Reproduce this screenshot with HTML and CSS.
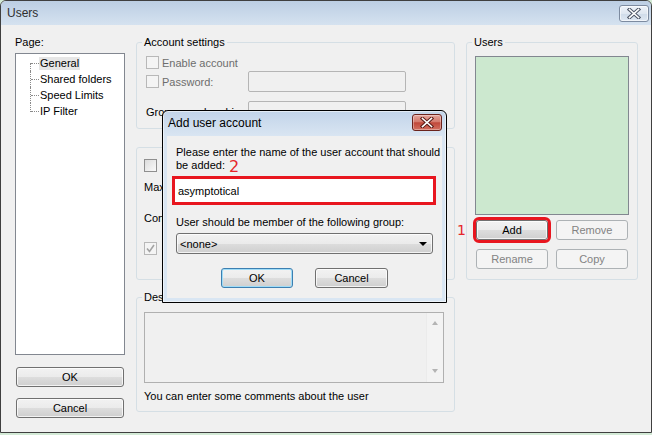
FILE: index.html
```html
<!DOCTYPE html>
<html>
<head>
<meta charset="utf-8">
<link rel="stylesheet" href="styles.css">
</head>
<body>
<div class="win">
  <div class="titlebar">
    <span class="title">Users</span>
    <span class="wclose">
      <svg width="14" height="11" viewBox="0 0 14 11"><path d="M2.5 1.5 L11.5 9.5 M11.5 1.5 L2.5 9.5" stroke="#4d5565" stroke-width="3.6" stroke-linecap="square" fill="none"/><path d="M2.5 1.5 L11.5 9.5 M11.5 1.5 L2.5 9.5" stroke="#fff" stroke-width="1.6" stroke-linecap="square" fill="none"/></svg>
    </span>
  </div>
  <div class="client">
    <div class="col-left">
      <div class="lbl">Page:</div>
      <div class="tree">
        <ul>
          <li><span class="sel">General</span></li>
          <li>Shared folders</li>
          <li>Speed Limits</li>
          <li>IP Filter</li>
        </ul>
      </div>
      <div class="btn ok-main">OK</div>
      <div class="btn cancel-main">Cancel</div>
    </div>

    <div class="col-mid">
      <fieldset class="gbox g1">
        <legend>Account settings</legend>
        <div class="inner in1">
          <div class="row r1"><span class="cb dis"></span><span class="dtext">Enable account</span></div>
          <div class="row r2"><span class="lab"><span class="cb dis"></span><span class="dtext">Password:</span></span><span class="tb"></span></div>
          <div class="row r3"><span class="lab">Group membership:</span><span class="tb"></span></div>
        </div>
      </fieldset>
      <div class="gbox g2">
        <div class="row s1"><span class="cb"></span></div>
        <div class="row s2"><span class="lab2">Max</span></div>
        <div class="row s3"><span class="lab2">Con</span></div>
        <div class="row s4"><span class="cb dis chk"><svg width="11" height="11" viewBox="0 0 11 11"><path d="M2 5.5 L4.5 8.5 L9 2" stroke="#a3a3a3" stroke-width="1.6" fill="none"/></svg></span></div>
      </div>
      <fieldset class="gbox g3">
        <legend>Description</legend>
        <div class="inner in3">
          <div class="ta">
            <div class="ta-body"></div>
            <div class="ta-scroll"><span class="arr up"></span><span class="arr down"></span></div>
          </div>
          <div class="hint">You can enter some comments about the user</div>
        </div>
      </fieldset>
    </div>

    <div class="col-right">
      <fieldset class="gbox gu">
        <legend>Users</legend>
        <div class="list"></div>
        <div class="brow first">
          <span class="anno one">1</span>
          <div class="btn ubtn add">Add</div>
          <div class="btn ubtn dis">Remove</div>
        </div>
        <div class="brow">
          <div class="btn ubtn dis">Rename</div>
          <div class="btn ubtn dis">Copy</div>
        </div>
      </fieldset>
    </div>
  </div>

  <div class="dialog">
    <div class="dtitle">
      <span class="dtitle-text">Add user account</span>
      <span class="dclose">
        <svg width="14" height="11" viewBox="0 0 14 11"><path d="M2.5 1.5 L11.5 9.5 M11.5 1.5 L2.5 9.5" stroke="#5a1c17" stroke-width="3.6" stroke-linecap="square" fill="none"/><path d="M2.5 1.5 L11.5 9.5 M11.5 1.5 L2.5 9.5" stroke="#fff" stroke-width="1.6" stroke-linecap="square" fill="none"/></svg>
      </span>
    </div>
    <div class="dclient">
      <div class="dtext1">Please enter the name of the user account that should<br>be added:<span class="anno two">2</span></div>
      <div class="namebox">asymptotical</div>
      <div class="dtext2">User should be member of the following group:</div>
      <div class="combo"><span>&lt;none&gt;</span><span class="tri"></span></div>
      <div class="dbtns">
        <div class="btn dbtn def">OK</div>
        <div class="btn dbtn cancel">Cancel</div>
      </div>
    </div>
  </div>
</div>
</body>
</html>
```
FILE: styles.css
```css
* { box-sizing: border-box; }
html, body { margin: 0; padding: 0; }
body {
  width: 652px;
  height: 435px;
  overflow: hidden;
  background: #d3ead6;
  font-family: "Liberation Sans", Arial, sans-serif;
  font-size: 11px;
  color: #000;
}
.win {
  position: relative;
  width: 652px;
  height: 433px;
  border: 1px solid #3f3f3f;
  border-radius: 6px 6px 0 0;
  background: #f0f0f0;
  display: flex;
  flex-direction: column;
  overflow: hidden;
}
.titlebar {
  flex: none;
  height: 24px;
  display: flex;
  align-items: center;
  padding-left: 6px;
  background: linear-gradient(#bccee3, #d5e2f0);
}
.title { flex: 1; font-size: 12px; color: #2e2e2e; }
.wclose {
  width: 30px;
  height: 17px;
  margin-right: 2px;
  margin-top: 1px;
  border: 1px solid #7d8ba0;
  border-radius: 3px;
  background: linear-gradient(#eef3f9 0%, #dfe7f1 50%, #cfdbe9 51%, #dfe8f3 100%);
  display: flex;
  align-items: center;
  justify-content: center;
  box-shadow: inset 0 0 0 1px rgba(255,255,255,.6);
}
.client {
  flex: 1;
  display: flex;
  gap: 11px;
  padding: 11px 0 0 14px;
}
.col-left { width: 110px; display: flex; flex-direction: column; }
.lbl { line-height: 13px; height: 13px; }
.tree {
  margin-top: 4px;
  height: 302px;
  border: 1px solid #828790;
  background: #fff;
}
.tree ul { list-style: none; margin: 1px 0 0 14px; padding: 0; }
.tree li {
  position: relative;
  height: 16px;
  line-height: 16px;
  padding-left: 10px;
  white-space: nowrap;
}
.tree li::before {
  content: "";
  position: absolute;
  left: 1px;
  top: 8px;
  width: 8px;
  border-top: 1px dotted #8a8a8a;
}
.tree li::after {
  content: "";
  position: absolute;
  left: 0;
  top: 0;
  bottom: 0;
  border-left: 1px dotted #8a8a8a;
}
.tree li:first-child::after { top: 8px; }
.tree li:last-child::after { bottom: 7px; }
.sel {
  display: inline-block;
  line-height: 13px;
  margin-left: -1px;
  padding: 0 1px;
  background: #e6e6e6;
}
.btn {
  height: 20px;
  border: 1px solid #707070;
  border-radius: 3px;
  background: linear-gradient(#f2f2f2 0%, #ebebeb 50%, #dddddd 51%, #cfcfcf 100%);
  box-shadow: inset 0 0 0 1px rgba(255,255,255,.75);
  display: flex;
  align-items: center;
  justify-content: center;
  line-height: 13px;
}
.btn.dis {
  border-color: #adb2b5;
  background: #f4f4f4;
  box-shadow: none;
  color: #838383;
}
.ok-main { margin: 12px 1px 0; }
.cancel-main { margin: 11px 1px 0; }

.col-mid { width: 319px; display: flex; flex-direction: column; }
.gbox {
  margin: 0;
  padding: 0;
  min-width: 0;
  border: 1px solid #d5dfe5;
  border-radius: 3px;
}
.gbox legend {
  padding: 0 2px;
  margin-left: 5px;
  line-height: 13px;
  font-size: 11px;
}
.g1 { height: 93px; }
.in1 { padding-left: 9px; }
.row { display: flex; align-items: center; white-space: nowrap; }
.r1 { margin-top: 7px; height: 13px; }
.r2 { margin-top: 2px; height: 21px; }
.r3 { margin-top: 9px; height: 21px; }
.cb {
  flex: none;
  width: 13px;
  height: 13px;
  border: 1px solid #8f8f8f;
  background: linear-gradient(135deg, #dcdcdc, #fafafa);
  margin-right: 3px;
  display: flex;
  align-items: center;
  justify-content: center;
}
.cb.dis { border-color: #b8b8b8; background: #f4f4f4; }
.dtext { color: #6d6d6d; }
.lab { width: 102px; display: flex; align-items: center; }
.tb {
  width: 158px;
  height: 21px;
  border: 1px solid #b5b5b5;
  border-radius: 2px;
  background: #f0f0f0;
}
.g2 { margin-top: 18px; height: 133px; padding-left: 7px; padding-top: 11px; }
.s1 { height: 13px; }
.s2 { margin-top: 4px; height: 21px; }
.s3 { margin-top: 10px; height: 21px; }
.s4 { margin-top: 14px; height: 13px; }

.g3 { margin-top: 11px; height: 121px; }
.in3 { padding-left: 7px; }
.ta {
  margin-top: 8px;
  width: 300px;
  height: 71px;
  border: 1px solid #b0b0b0;
  display: flex;
}
.ta-body { flex: 1; background: #f0f0f0; }
.ta-scroll {
  width: 17px;
  background: #f3f3f3;
  border-left: 1px solid #ebebeb;
  display: flex;
  flex-direction: column;
  justify-content: space-between;
  align-items: center;
  padding: 8px 0 9px;
}
.arr { width: 0; height: 0; border-left: 3.5px solid transparent; border-right: 3.5px solid transparent; }
.arr.up { border-bottom: 4px solid #b4b4b4; }
.arr.down { border-top: 4px solid #b4b4b4; }
.hint { margin-top: 7px; line-height: 13px; }

.col-right { width: 172px; }
.gu { height: 244px; }
.list {
  margin: 7px 0 0 8px;
  width: 154px;
  height: 159px;
  border: 1px solid #828790;
  background: #cce8cf;
}
.brow {
  position: relative;
  display: flex;
  gap: 8px;
  padding-left: 9px;
  margin-top: 9px;
}
.brow.first { margin-top: 5px; }
.ubtn { width: 72px; }
.add { outline: 3px solid #e8161f; outline-offset: 0; }
.anno {
  font-family: "DejaVu Sans", sans-serif;
  color: #e5262b;
}
.one {
  position: absolute;
  left: -10px;
  top: 0;
  line-height: 20px;
  font-size: 14px;
}

.dialog {
  position: absolute;
  left: 161px;
  top: 109px;
  width: 285px;
  height: 193px;
  border: 1px solid #000;
  border-radius: 6px 6px 0 0;
  background: linear-gradient(#c2d4e9 0, #d9e5f2 25px, #d9e6f3 100%);
  padding: 0 4px 4px;
  display: flex;
  flex-direction: column;
  box-shadow: inset 0 0 0 1px rgba(255,255,255,.55);
}
.dtitle {
  height: 25px;
  flex: none;
  display: flex;
  align-items: flex-start;
  padding-left: 1px;
}
.dtitle-text { flex: 1; font-size: 12px; line-height: 13px; margin-top: 6px; }
.dclose {
  width: 30px;
  height: 17px;
  margin-top: 3px;
  border: 1px solid #6b231c;
  border-radius: 3px;
  background: linear-gradient(#e4a59c 0%, #d47a6c 45%, #c0483a 52%, #d27060 100%);
  box-shadow: inset 0 0 0 1px rgba(255,255,255,.35);
  display: flex;
  align-items: center;
  justify-content: center;
}
.dclient {
  flex: 1;
  background: #f0f0f0;
  display: flex;
  flex-direction: column;
}
.dtext1 {
  margin: 10px 0 0 9px;
  line-height: 13px;
  white-space: nowrap;
}
.two {
  display: inline-block;
  font-size: 16px;
  line-height: 13px;
  margin-left: 4px;
  vertical-align: top;
  position: relative;
  top: 1px;
}
.namebox {
  margin: 4px 0 0 5px;
  width: 264px;
  height: 29px;
  border: 3px solid #e8161f;
  background: #fff;
  padding-left: 3px;
  display: flex;
  align-items: center;
}
.dtext2 { margin: 11px 0 0 9px; line-height: 13px; white-space: nowrap; }
.combo {
  margin: 4px 0 0 9px;
  width: 257px;
  height: 21px;
  border: 1px solid #707070;
  border-radius: 3px;
  background: linear-gradient(#f2f2f2 0%, #ebebeb 50%, #dddddd 51%, #cfcfcf 100%);
  box-shadow: inset 0 0 0 1px rgba(255,255,255,.75);
  display: flex;
  align-items: center;
  justify-content: space-between;
  padding: 0 5px 0 3px;
}
.tri {
  width: 0; height: 0;
  border-left: 4px solid transparent;
  border-right: 4px solid transparent;
  border-top: 4px solid #000;
}
.dbtns {
  margin-top: 14px;
  display: flex;
  justify-content: center;
  gap: 22px;
}
.dbtn { width: 72px; }
.dbtn.cancel { width: 73px; }
.btn.def {
  border-color: #3c7fb1;
  box-shadow: inset 0 0 0 1px #9fdcf7;
}
```
